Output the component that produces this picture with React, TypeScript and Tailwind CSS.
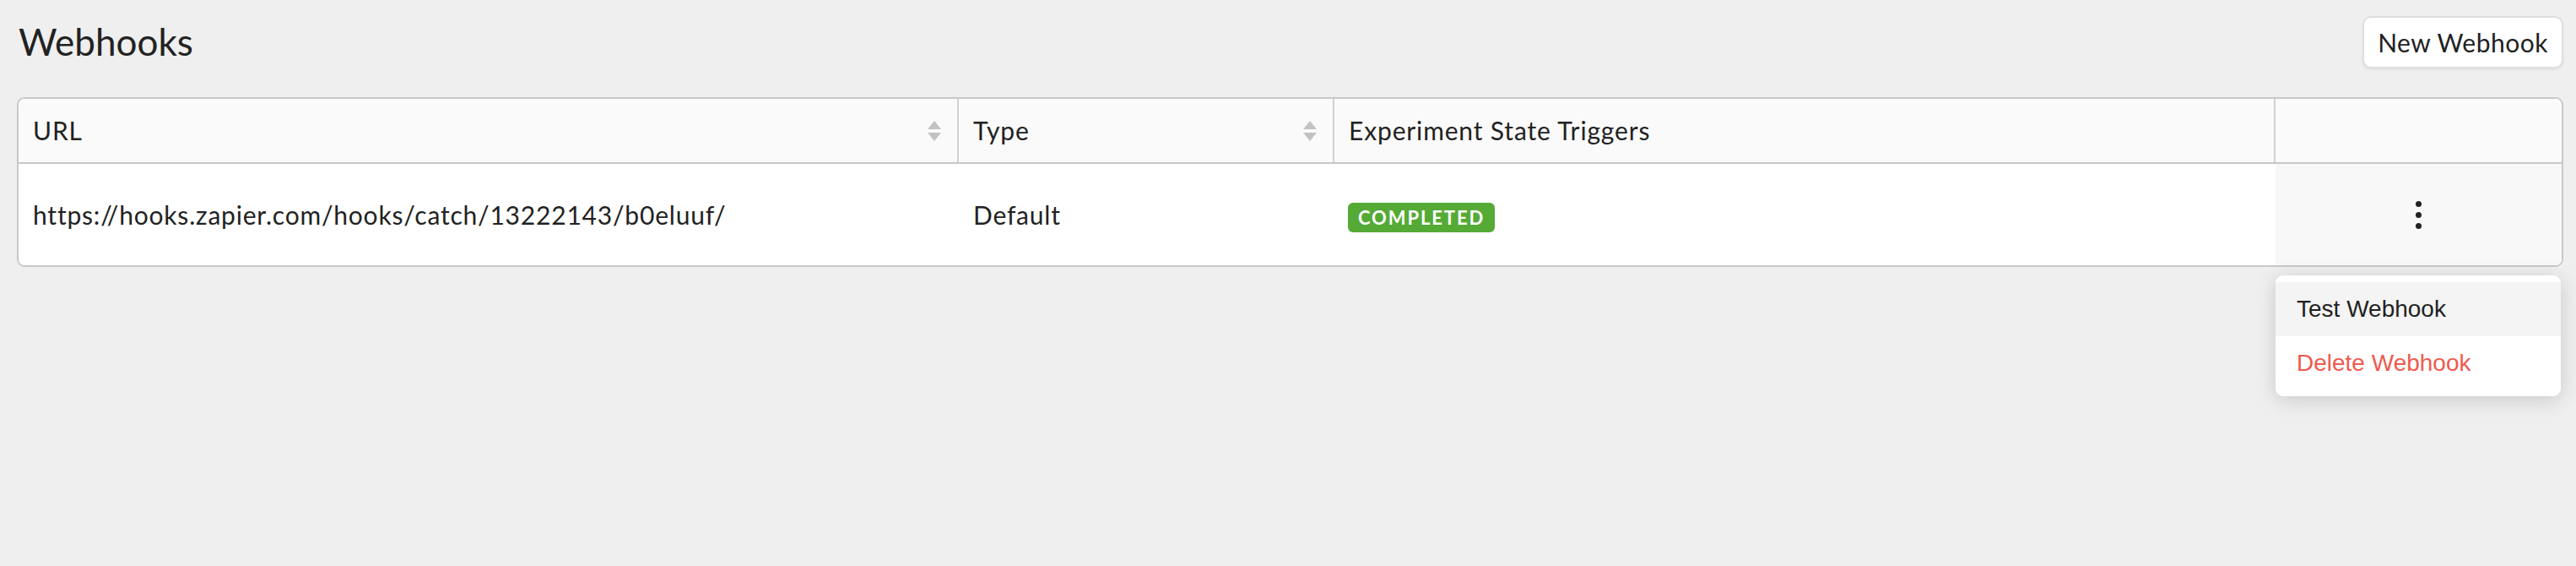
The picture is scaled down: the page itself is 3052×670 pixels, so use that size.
import React from "react";

function SortIcon() {
  return (
    <svg width="16" height="24" viewBox="0 0 16 24" className="shrink-0">
      <path d="M8 0 L16 10 L0 10 Z" fill="#c2c2c2" />
      <path d="M0 14 L16 14 L8 24 Z" fill="#c2c2c2" />
    </svg>
  );
}

export default function App() {
  return (
    <div
      className="min-h-screen bg-[#efefef] pl-[20px] pr-[15px] pt-[19px] text-[#222]"
      style={{ fontFamily: "Lato, 'Open Sans', sans-serif" }}
    >
      {/* page header */}
      <div className="flex items-center justify-between h-[62px]">
        <h1 className="text-[44px] leading-none ml-[2px] -mt-[2px]">Webhooks</h1>
        <button className="h-[62px] px-[16px] bg-white border-2 border-[#dedede] rounded-[10px] text-[30px] tracking-[0.5px] leading-none text-[#222] shadow-[0_2px_3px_rgba(0,0,0,0.06)]">
          New Webhook
        </button>
      </div>

      <div className="relative mt-[34px]">
        <div className="rounded-[9px] border-2 border-[#c8c8c8] bg-white overflow-hidden">
          {/* header row */}
          <div className="grid grid-cols-[1112px_445px_1115px_1fr] h-[77px] bg-[#fafafa] border-b-2 border-[#c8c8c8] text-[30px] tracking-[0.85px]">
            <div className="flex items-center justify-between pl-[17px] pr-[19px]">
              <span>URL</span>
              <SortIcon />
            </div>
            <div className="flex items-center justify-between pl-[17px] pr-[19px] border-l-2 border-[#d2d2d2]">
              <span>Type</span>
              <SortIcon />
            </div>
            <div className="flex items-center pl-[17px] border-l-2 border-[#d2d2d2]">
              <span>Experiment State Triggers</span>
            </div>
            <div className="border-l-2 border-[#d2d2d2]" />
          </div>

          {/* body row */}
          <div className="grid grid-cols-[1112px_445px_1115px_1fr] h-[120px] text-[30px] tracking-[0.8px]">
            <div className="flex items-center pl-[17px]">
              https://hooks.zapier.com/hooks/catch/13222143/b0eluuf/
            </div>
            <div className="flex items-center pl-[19px]">Default</div>
            <div className="flex items-center pl-[18px]">
              <span className="mt-[7px] h-[35px] px-[12px] flex items-center rounded-[6px] bg-[#55aa36] text-white text-[22px] font-bold tracking-[1.9px] leading-none">
                COMPLETED
              </span>
            </div>
            <div className="flex items-center justify-center bg-[#f8f8f8] ml-[2px]">
              <div className="flex flex-col gap-[6px]">
                <span className="w-[7px] h-[7px] rounded-full bg-[#222]" />
                <span className="w-[7px] h-[7px] rounded-full bg-[#222]" />
                <span className="w-[7px] h-[7px] rounded-full bg-[#222]" />
              </div>
            </div>
          </div>
        </div>

        {/* actions menu */}
        <div
          className="absolute right-[3px] top-[calc(100%+10px)] w-[338px] bg-white rounded-[9px] pt-[8px] pb-[7px] shadow-[0_4px_24px_rgba(0,0,0,0.16)] text-[28px] leading-none"
          style={{ fontFamily: "'Liberation Sans', Arial, sans-serif" }}
        >
          <div className="h-[64px] flex items-center px-[25px] bg-[#f4f4f4] text-[#222]">Test Webhook</div>
          <div className="h-[64px] flex items-center px-[25px] text-[#ee5a4e]">Delete Webhook</div>
        </div>
      </div>
    </div>
  );
}
